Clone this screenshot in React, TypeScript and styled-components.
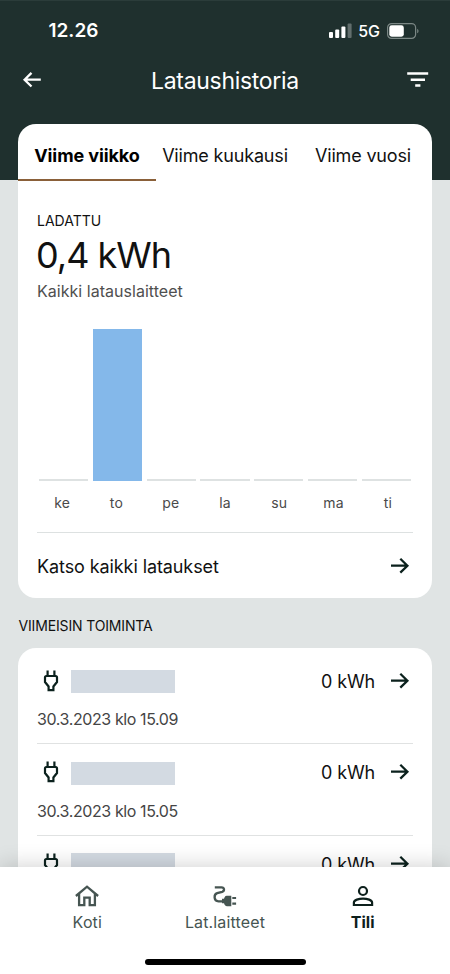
import React from 'react';
import styled, { createGlobalStyle } from 'styled-components';

const GlobalStyle = createGlobalStyle`
  * { box-sizing: border-box; }
  body { margin: 0; background: #e0e4e4; }
`;

const Screen = styled.div`
  display: flex;
  flex-direction: column;
  width: 450px;
  height: 974px;
  overflow: hidden;
  background: #e0e4e4;
  color: #111;
  font-family: Inter, "Liberation Sans", sans-serif;
`;

const Header = styled.header`
  flex: none;
  height: 180px;
  background: #1f302e;
  border-top: 1px solid #2b3c3a;
  color: #fff;
`;

const StatusBar = styled.div`
  display: flex;
  align-items: center;
  justify-content: space-between;
  height: 51px;
  padding: 8px 31px 0 48.5px;
`;

const Clock = styled.span`
  font-size: 19px;
  line-height: 24px;
  font-weight: 600;
`;

const StatusIcons = styled.div`
  display: flex;
  align-items: center;
`;

const Network = styled.span`
  margin: 0 7px 0 6.5px;
  font-size: 16px;
  line-height: 20px;
  font-weight: 500;
`;

const TitleBar = styled.div`
  display: flex;
  align-items: center;
  justify-content: space-between;
  height: 56px;
  padding: 0 20px;
`;

const Title = styled.h1`
  margin: 2px 0 0;
  font-size: 23px;
  line-height: 30px;
  font-weight: 400;
  letter-spacing: -0.3px;
`;

const Content = styled.main`
  flex: 1;
  min-height: 0;
  margin-top: -56px;
  padding: 0 18px;
  overflow: hidden;
`;

const Card = styled.section`
  border-radius: 18px;
  background: #fff;
`;

const Tabs = styled.div`
  display: grid;
  grid-template-columns: repeat(3, 1fr);
  height: 57px;
`;

const Tab = styled.button<{ $active?: boolean }>`
  padding: 9px 0 0;
  border: 0;
  border-bottom: 2px solid ${p => (p.$active ? '#8a6039' : 'transparent')};
  background: none;
  color: ${p => (p.$active ? '#000' : '#111')};
  font: ${p => (p.$active ? 700 : 400)} 18px/22px Inter, sans-serif;
  letter-spacing: ${p => (p.$active ? '-0.1px' : '-0.17px')};
  white-space: nowrap;
`;

const Body = styled.div`
  padding: 0 19px;
`;

const Overline = styled.h2<{ $section?: boolean }>`
  margin: ${p => (p.$section ? '18px 0 12px 0.5px' : '0')};
  font-size: 14px;
  line-height: 20px;
  font-weight: 400;
  letter-spacing: ${p => (p.$section ? '-0.15px' : '0')};
`;

const Summary = styled.div`
  padding-top: 30px;
`;

const Total = styled.div`
  margin-top: 4px;
  margin-left: -1px;
  font-size: 36px;
  line-height: 40px;
  letter-spacing: -1px;
`;

const Caption = styled.div`
  margin-top: 6px;
  font-size: 16px;
  line-height: 20px;
  letter-spacing: 0.03px;
  color: #4f4f4f;
`;

const Chart = styled.div`
  display: grid;
  grid-template-columns: repeat(7, 1fr);
  align-items: end;
  column-gap: 4.7px;
  height: 152px;
  margin: 28px 2px 0;
`;

const Bar = styled.div<{ $filled: boolean }>`
  background: ${p => (p.$filled ? '#84b8ea' : '#dee2e2')};
`;

const Days = styled.div`
  display: grid;
  grid-template-columns: repeat(7, 1fr);
  margin: 12px -2px 19px;
  font-size: 14px;
  line-height: 20px;
  letter-spacing: 0.2px;
  text-align: center;
  color: #4a4a4a;
`;

const AllLink = styled.div`
  display: flex;
  align-items: center;
  justify-content: space-between;
  height: 66px;
  padding-right: 1px;
  border-top: 1px solid #dde1e1;
`;

const LinkText = styled.span`
  margin-top: 2px;
  font-size: 18px;
  line-height: 24px;
  letter-spacing: -0.09px;
`;

const ActivityList = styled(Card)`
  padding: 4.5px 19px 0;
`;

const Item = styled.div`
  padding: 13px 0 14px;
  border-bottom: 1px solid #e0e2e2;
`;

const ItemRow = styled.div`
  display: flex;
  align-items: center;
  height: 30px;
  padding: 0 1px 0 6px;
`;

const Redacted = styled.div`
  width: 104px;
  height: 23px;
  margin: 2px auto 0 12px;
  background: #d3dae2;
`;

const Energy = styled.span`
  margin: 2px 13px 0 0;
  font-size: 18px;
  line-height: 24px;
  letter-spacing: -0.15px;
`;

const Timestamp = styled.div`
  margin-top: 13.5px;
  font-size: 16px;
  line-height: 20px;
  letter-spacing: -0.4px;
  color: #454545;
`;

const BottomBar = styled.footer`
  flex: none;
  display: flex;
  flex-direction: column;
  align-items: center;
  justify-content: space-between;
  position: relative;
  height: 107px;
  padding: 18px 18.5px 9px;
  background: #fff;
  box-shadow: 0 0 22px rgba(0, 0, 0, 0.2);
`;

const Nav = styled.nav`
  display: grid;
  grid-template-columns: repeat(3, 1fr);
  width: 100%;
`;

const NavItem = styled.div<{ $active?: boolean }>`
  display: flex;
  flex-direction: column;
  align-items: center;
  gap: 5px;
  font-size: 16px;
  line-height: 21px;
  font-weight: ${p => (p.$active ? 700 : 400)};
  letter-spacing: ${p => (p.$active ? '0' : '0.15px')};
  color: ${p => (p.$active ? '#0d201c' : '#465552')};
`;

const HomeIndicator = styled.div`
  width: 161px;
  height: 6px;
  border-radius: 3px;
  background: #000;
`;

const Signal = () => (
  <svg width="23" height="15" viewBox="0 0 23 15" fill="#fff">
    <rect x="0" y="9" width="4" height="6" rx="1" />
    <rect x="6.2" y="6.5" width="4" height="8.5" rx="1" />
    <rect x="12.4" y="3.5" width="4" height="11.5" rx="1" />
    <rect x="18.6" y="0.5" width="4" height="14.5" rx="1" opacity="0.3" />
  </svg>
);

const Battery = () => (
  <svg width="32" height="16" viewBox="0 0 32 16" fill="none">
    <rect x="0.6" y="0.6" width="28" height="14.8" rx="4" stroke="#7b8785" strokeWidth="1.2" />
    <rect x="2.3" y="2.3" width="14.5" height="11.4" rx="2.4" fill="#fff" />
    <path d="M30.2 5.7c1.8.8 1.8 3.8 0 4.6z" fill="#7b8785" />
  </svg>
);

const BackArrow = () => (
  <svg width="24" height="24" viewBox="0 0 24 24" fill="none" stroke="#fff" strokeWidth="2.3">
    <path d="M20.8 11.7H4.2M11.5 4.9 4.6 11.7l6.9 6.8" />
  </svg>
);

const Arrow = () => (
  <svg width="24" height="24" viewBox="0 0 24 24" fill="none" stroke="#0b211d" strokeWidth="2.3">
    <path d="M3 11.7h16.8M12.3 4.8 19.4 11.7l-7.1 6.9" />
  </svg>
);

const Filter = () => (
  <svg width="24" height="24" viewBox="0 0 24 24" stroke="#fff" strokeWidth="2.4">
    <path d="M1.2 5.5h21M4.7 11.8h14.3M9.2 17.5h5.2" />
  </svg>
);

const Plug = () => (
  <svg width="16" height="22" viewBox="0 0 16 22" fill="none" stroke="#0b211d" strokeWidth="2.2">
    <path d="M4.6.5v5.2M11.4.5v5.2M3.4 6h9.2q1.4 0 1.4 1.4V12l-3.6 4.5v3.7H5.6v-3.7L2 12V7.4Q2 6 3.4 6z" />
  </svg>
);

const Home = () => (
  <svg width="24" height="22" viewBox="0 0 24 22" fill="none" stroke="currentColor" strokeWidth="2.3">
    <path d="M.9 11 12 1.7 23.1 11M4.1 8.7V20.2h5.2v-7.6h5.4v7.6h5.2V8.7" />
  </svg>
);

const Charger = () => (
  <svg width="24" height="22" viewBox="0 0 24 22" fill="none" stroke="currentColor">
    <path
      d="M1.8 2.3h6.7c3 0 3.4 3.6.7 4.5l-5 1.4c-3.7 1.2-3.6 7.9 1.3 8.1h4"
      strokeWidth="2.3"
    />
    <path d="M18.3 10.8v10.4h-4.5q-1.4 0-2.2-1.4l-.6-1.6H9v-4.4h2l.6-1.6q.8-1.4 2.2-1.4z" fill="currentColor" stroke="none" />
    <path d="M19.3 13h3.8M19.3 18.6h3.8" strokeWidth="2.2" />
  </svg>
);

const Person = () => (
  <svg width="22" height="22" viewBox="0 0 22 22" fill="none" stroke="currentColor" strokeWidth="2.2">
    <circle cx="11" cy="6" r="4" />
    <path d="M1.9 20v-2.4c0-2.6 4.9-4 9.1-4s9.1 1.4 9.1 4V20z" />
  </svg>
);

const week = [
  { day: 'ke', value: 0 },
  { day: 'to', value: 0.4 },
  { day: 'pe', value: 0 },
  { day: 'la', value: 0 },
  { day: 'su', value: 0 },
  { day: 'ma', value: 0 },
  { day: 'ti', value: 0 },
];

const peak = Math.max(...week.map(d => d.value));

const activity: { id: number; time?: string }[] = [
  { id: 1, time: '30.3.2023 klo 15.09' },
  { id: 2, time: '30.3.2023 klo 15.05' },
  { id: 3 },
];

export default function App() {
  return (
    <>
      <GlobalStyle />
      <Screen>
        <Header>
          <StatusBar>
            <Clock>12.26</Clock>
            <StatusIcons>
              <Signal />
              <Network>5G</Network>
              <Battery />
            </StatusIcons>
          </StatusBar>
          <TitleBar>
            <BackArrow />
            <Title>Lataushistoria</Title>
            <Filter />
          </TitleBar>
        </Header>
        <Content>
          <Card>
            <Tabs>
              <Tab $active>Viime viikko</Tab>
              <Tab>Viime kuukausi</Tab>
              <Tab>Viime vuosi</Tab>
            </Tabs>
            <Body>
              <Summary>
                <Overline>LADATTU</Overline>
                <Total>0,4 kWh</Total>
                <Caption>Kaikki latauslaitteet</Caption>
              </Summary>
              <Chart>
                {week.map(({ day, value }) => (
                  <Bar
                    key={day}
                    $filled={value > 0}
                    style={{ height: Math.max(2.5, (value / peak) * 152) }}
                  />
                ))}
              </Chart>
              <Days>
                {week.map(({ day }) => (
                  <span key={day}>{day}</span>
                ))}
              </Days>
              <AllLink>
                <LinkText>Katso kaikki lataukset</LinkText>
                <Arrow />
              </AllLink>
            </Body>
          </Card>
          <Overline $section>VIIMEISIN TOIMINTA</Overline>
          <ActivityList>
            {activity.map(({ id, time }) => (
              <Item key={id}>
                <ItemRow>
                  <Plug />
                  <Redacted />
                  <Energy>0 kWh</Energy>
                  <Arrow />
                </ItemRow>
                <Timestamp>{time}</Timestamp>
              </Item>
            ))}
          </ActivityList>
        </Content>
        <BottomBar>
          <Nav>
            <NavItem>
              <Home />
              <span>Koti</span>
            </NavItem>
            <NavItem>
              <Charger />
              <span>Lat.laitteet</span>
            </NavItem>
            <NavItem $active>
              <Person />
              <span>Tili</span>
            </NavItem>
          </Nav>
          <HomeIndicator />
        </BottomBar>
      </Screen>
    </>
  );
}
